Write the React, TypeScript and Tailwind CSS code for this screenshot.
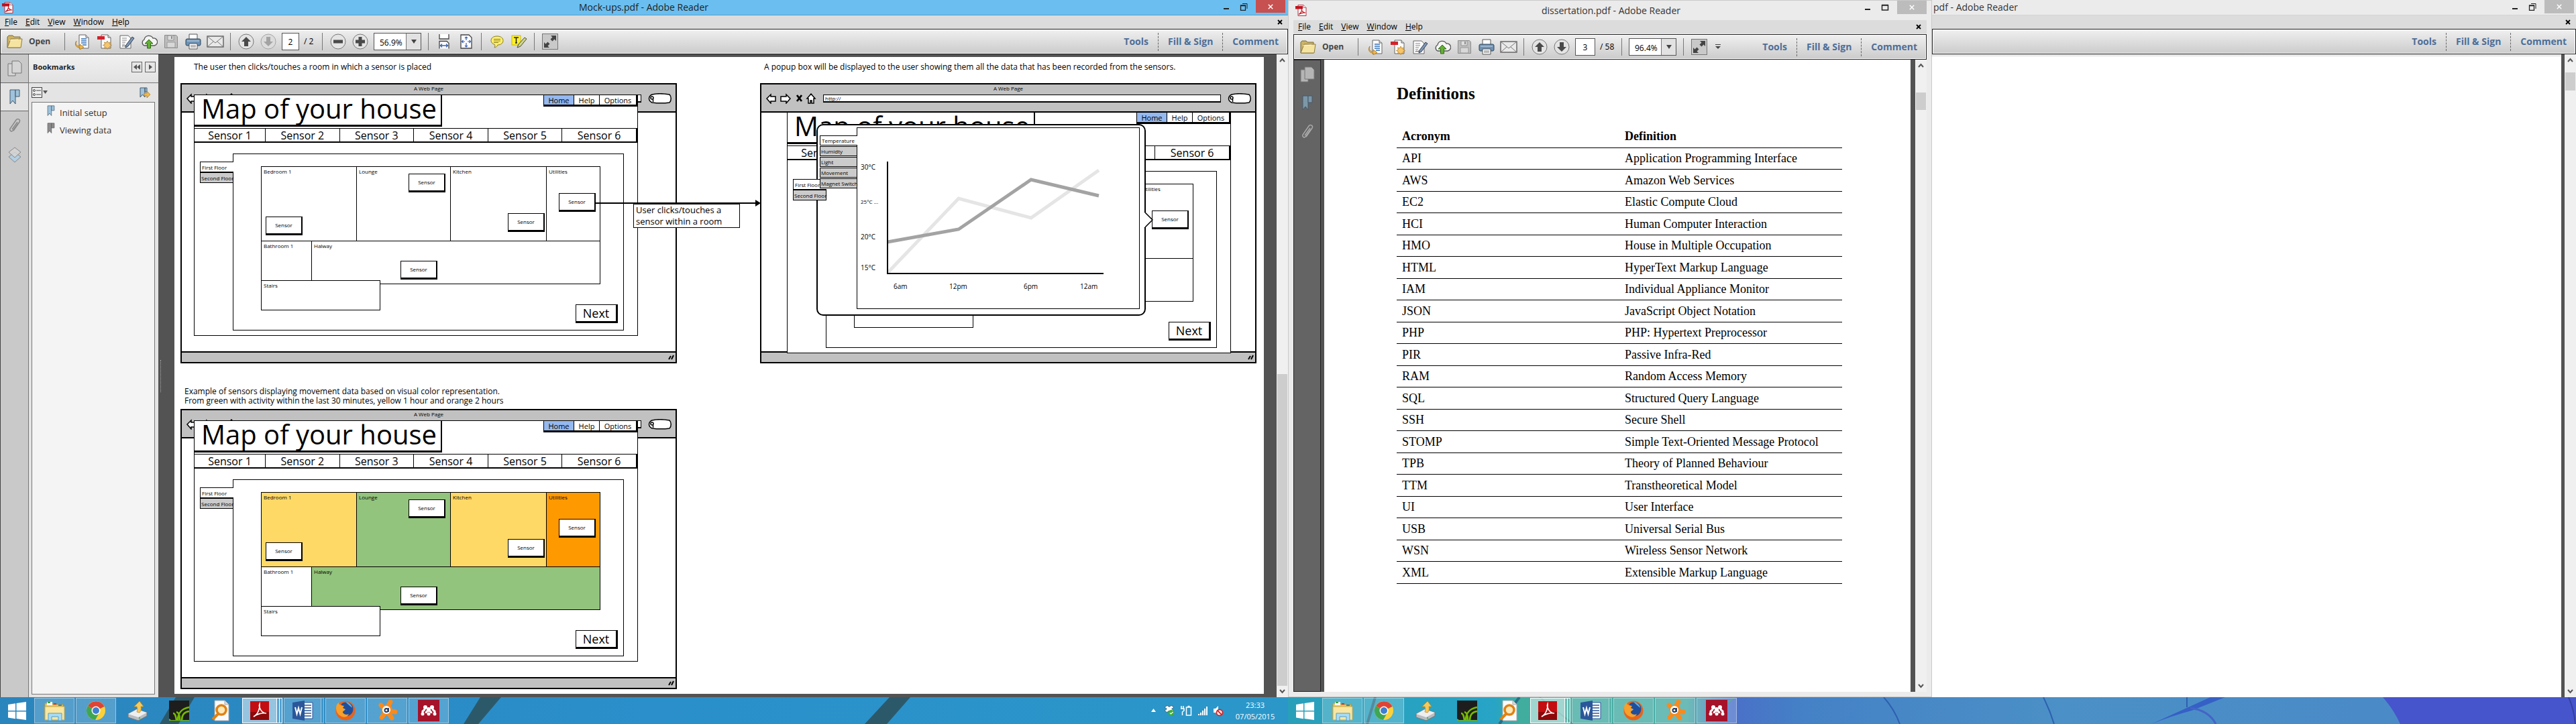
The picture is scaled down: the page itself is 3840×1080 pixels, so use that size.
import React from "react";

type Kids = { children?: React.ReactNode };

/* ---------- small drawings ---------- */

function PdfLogo() {
  return (
    <svg viewBox="0 0 17 17" className="h-[17px] w-[17px]" aria-hidden="true">
      <path d="M4 .5h8l4 4v12H4z" fill="#fff" stroke="#a34" />
      <path d="M12 .5v4h4" fill="#eee" stroke="#a34" strokeWidth=".7" />
      <path d="M0 2h11v4.5H0z" fill="#c1121c" />
      <path d="M5 14.5c3-2 5-5.500 4.500-7.500-.8 2 2.500 5 5.500 5-3-.5-7 .5-10 2.500z" fill="none" stroke="#c1121c" strokeWidth="1.200" />
    </svg>
  );
}

function Folder() {
  return (
    <svg viewBox="0 0 26 20" className="h-5 w-[26px]" aria-hidden="true">
      <path d="M2 19V3l2-2h6l2 2h9v16z" fill="#cdb366" stroke="#7d6a33" />
      <path d="M7 6h17l-2 13H2z" fill="#f5e3a0" stroke="#8d7a43" />
      <path d="M5 8l13-1" stroke="#fff8d8" />
    </svg>
  );
}

function DocPage({ children }: Kids) {
  return (
    <svg viewBox="0 0 24 24" className="h-6 w-6" aria-hidden="true">
      <path d="M7 2h10l4 4v16H7z" fill="#fbfbfb" stroke="#666" />
      <path d="M17 2v4h4" fill="#ddd" stroke="#666" />
      {children}
    </svg>
  );
}

const star = "M16 11l1.500 3 3-1-1 3 3 1.500-3 1.500 1 3-3-1-1.500 2.500-1.500-2.500-3 1 1-3-3-1.500 3-1.500-1-3 3 1z";

function ToolIcon({ name }: { name: string }) {
  switch (name) {
    case "convert":
      return (
        <DocPage>
          <path d="M10 8h8M10 11h8M10 14h8M12 17h6" stroke="#2f72b8" strokeWidth="1.500" />
          <path d="M3 11c-2 5 0 8 5 8v-3l6 4.500-6 3.500v-3C1 21 0 15 3 11z" fill="#f0b84a" stroke="#a8741a" strokeWidth=".8" />
        </DocPage>
      );
    case "create":
      return (
        <DocPage>
          <path d="M1 4h11v5H1z" fill="#d3222a" />
          <path d={star} fill="#f7c66a" stroke="#b5802a" strokeWidth=".8" />
        </DocPage>
      );
    case "sign":
      return (
        <svg viewBox="0 0 24 24" className="h-6 w-6" aria-hidden="true">
          <path d="M2 3h12l4 4v15H2z" fill="#fbfbfb" stroke="#666" />
          <path d="M5 7h7M5 10h7M5 13h5M5 16h4" stroke="#888" />
          <path d="M20 5l3 2-9 12-4 2 1-4z" fill="#7f97b5" stroke="#333f55" />
          <path d="M5 19c2-2 3 1 5-1" fill="none" stroke="#333" />
        </svg>
      );
    case "cloud":
      return (
        <svg viewBox="0 0 26 24" className="h-6 w-[26px]" aria-hidden="true">
          <path d="M6 18a5 5 0 010-9 7 7 0 0113-2 5.500 5.500 0 012 11z" fill="#f4f4f4" stroke="#555" strokeWidth="1.300" />
          <path d="M13 9l6 6h-3.500v7h-5v-7H7z" fill="#63b034" stroke="#2f6b12" />
        </svg>
      );
    case "save":
      return (
        <svg viewBox="0 0 22 22" className="h-[22px] w-[22px]" aria-hidden="true">
          <path d="M1.500 1.500h17l2 2v17h-19z" fill="#bdbdbd" stroke="#8d8d8d" />
          <path d="M6 2h9v7H6z" fill="#dedede" stroke="#959595" />
          <path d="M11 3h2v4h-2z" fill="#8d8d8d" />
          <path d="M5 12h12v8H5z" fill="#d8d8d8" stroke="#9a9a9a" />
        </svg>
      );
    case "print":
      return (
        <svg viewBox="0 0 24 24" className="h-6 w-6" aria-hidden="true">
          <path d="M6 1h12v9H6z" fill="#fff" stroke="#555" />
          <rect x="1" y="8" width="22" height="10" rx="2" fill="#6d92b4" stroke="#2e4459" />
          <path d="M3 11h18" stroke="#c9dcec" />
          <path d="M6 15h12v8H6z" fill="#fff" stroke="#555" />
          <path d="M8 18h8M8 20h8" stroke="#777" />
        </svg>
      );
    case "mail":
      return (
        <svg viewBox="0 0 26 18" className="h-[18px] w-[26px]" aria-hidden="true">
          <rect x="1" y="1" width="24" height="16" fill="#e9e9e9" stroke="#555" strokeWidth="1.300" />
          <path d="M1 1l12 10L25 1M1 17l9-8M25 17l-9-8" fill="none" stroke="#777" />
        </svg>
      );
    case "fitwidth":
      return (
        <svg viewBox="0 0 20 22" className="h-[22px] w-5" aria-hidden="true">
          <path d="M3 0v7h14V0" fill="#fff" stroke="#444" strokeWidth="1.300" />
          <path d="M3 21.500V10.500h11l3 3v8" fill="#fff" stroke="#444" strokeWidth="1.300" />
          <path d="M4 17h12M7 14.500L4.500 17 7 19.500M13 14.500l2.500 2.500-2.500 2.500" fill="none" stroke="#3a62b0" strokeWidth="1.300" />
        </svg>
      );
    case "fitpage":
      return (
        <svg viewBox="0 0 20 22" className="h-[22px] w-5" aria-hidden="true">
          <path d="M2 1h12l4 4v16H2z" fill="#fff" stroke="#444" strokeWidth="1.300" />
          <path d="M10 4v5M10 13v6M4 11h4M12 11h4M8 6l2-2 2 2M8 17l2 2 2-2M5.500 9l-2 2 2 2M14.500 9l2 2-2 2" fill="none" stroke="#3a62b0" strokeWidth="1.200" />
        </svg>
      );
    case "note":
      return (
        <svg viewBox="0 0 22 20" className="h-5 w-[22px]" aria-hidden="true">
          <path d="M11 2c6 0 9 3 9 6.500S17 15 12 15c-1 2-3 4-5 4 1-1 1-3 .5-4.500C4 13.500 2 11 2 8.500 2 5 5 2 11 2z" fill="#fdf06a" stroke="#8a7a20" />
          <path d="M6 6.500h10M6 9h10M6 11.500h7" stroke="#8a7a20" />
        </svg>
      );
    case "marker":
      return (
        <svg viewBox="0 0 24 22" className="h-[22px] w-6" aria-hidden="true">
          <rect x="1" y="2" width="13" height="14" fill="#fff12a" stroke="#b5a400" strokeWidth=".7" />
          <path d="M4 5h7M7.500 5v8M6 13h3" stroke="#222" strokeWidth="1.500" />
          <path d="M20 5l3 2-9 11-5 2 2-5z" fill="#cfd58a" stroke="#4a4a3a" />
        </svg>
      );
    default:
      return (
        <svg viewBox="0 0 24 24" className="h-6 w-6" aria-hidden="true">
          <rect x=".5" y=".5" width="23" height="23" fill="#c9c9c9" stroke="#777" />
          <path d="M13 3h8v8l-2.500-2.500-3 3-3-3 3-3zM3 21v-8l2.500 2.500 3-3 3 3-3 3L11 21z" fill="#444" />
        </svg>
      );
  }
}

function Round({ kind, dim }: { kind: "up" | "down" | "minus" | "plus"; dim?: boolean }) {
  const d = {
    up: "M12 5l7 7h-4v7H9v-7H5z",
    down: "M12 19l7-7h-4V5H9v7H5z",
    minus: "M5 9.500h14v5H5z",
    plus: "M9.500 5h5v4.500H19v5h-4.500V19h-5v-4.500H5v-5h4.500z",
  }[kind];
  return (
    <svg viewBox="0 0 24 24" className="h-6 w-6" aria-hidden="true">
      <circle cx="12" cy="12" r="11" fill={dim ? "#dcdcdc" : "#e4e4e4"} stroke={dim ? "#a5a5a5" : "#777"} />
      <path d={d} fill={dim ? "#a3a3a3" : "#4a4a4a"} />
    </svg>
  );
}

function Ribbon({ color, edge }: { color: string; edge: string }) {
  return (
    <svg viewBox="0 0 20 24" className="h-full w-full" aria-hidden="true">
      <path d="M3 1h8v21l-4-5-4 5z" fill={color} stroke={edge} />
      <path d="M11 1h6v10h-6z" fill={color} stroke={edge} />
    </svg>
  );
}

/* ---------- window chrome ---------- */

function Controls({ restore, red }: { restore?: boolean; red?: boolean }) {
  return (
    <div className="flex h-full items-start">
      <button aria-label="Minimize" className="flex h-5 w-6 items-center justify-center">
        <svg viewBox="0 0 10 10" className="h-2.5 w-2.5"><path d="M1 7h8v2H1z" fill="#222" /></svg>
      </button>
      <button aria-label={restore ? "Restore" : "Maximize"} className="flex h-5 w-7 items-center justify-center">
        <svg viewBox="0 0 12 12" className="h-3 w-3" fill="none" stroke="#222">
          {restore ? (
            <>
              <path d="M1.500 4h7v7.500h-7zM1 4.500h8" strokeWidth="1.300" />
              <path d="M4 1.500h7V9" />
            </>
          ) : (
            <path d="M1.500 3h9v7h-9zM1 2.500h10" strokeWidth="1.500" />
          )}
        </svg>
      </button>
      <button
        aria-label="Close"
        className={
          red
            ? "ml-1 flex h-[19px] w-11 items-center justify-center bg-[#c75050]"
            : "ml-1 flex h-5 w-11 items-center justify-center bg-[#bcbcbc]"
        }
      >
        <svg viewBox="0 0 10 10" className="h-2 w-2"><path d="M1 1l8 8M9 1L1 9" stroke="#fff" strokeWidth="1.800" /></svg>
      </button>
    </div>
  );
}

function CloseDoc() {
  return (
    <button aria-label="Close document" className="ml-auto flex w-4 items-center justify-center">
      <svg viewBox="0 0 8 8" className="h-2 w-2"><path d="M1 1l6 6M7 1L1 7" stroke="#000" strokeWidth="1.800" /></svg>
    </button>
  );
}

function Menu({ items = true }: { items?: boolean }) {
  return (
    <nav className="flex h-5 shrink-0 items-stretch bg-[#dcdcdc] pl-[7px] pr-1 text-xs leading-5 text-black">
      {items && (
        <div className="flex gap-3">
          {["File", "Edit", "View", "Window", "Help"].map((m) => (
            <button key={m} className="whitespace-nowrap"><u>{m[0]}</u>{m.slice(1)}</button>
          ))}
        </div>
      )}
      <CloseDoc />
    </nav>
  );
}

function Sep() {
  return <div className="mx-1.5 h-[26px] w-px shrink-0 bg-[#777]" />;
}

function IconButton({ label, children }: Kids & { label: string }) {
  return (
    <button aria-label={label} className="flex h-7 w-[33px] shrink-0 items-center justify-center">
      {children}
    </button>
  );
}

function RightTools() {
  return (
    <div className="ml-auto flex items-center pr-[13px] text-sm font-bold text-[#4d6e99]">
      <button className="pr-3.5">Tools</button>
      <button className="h-[27px] whitespace-nowrap border-l border-dashed border-[#666] px-3.5">Fill &amp; Sign</button>
      <button className="h-[27px] border-l border-dashed border-[#666] pl-3.5">Comment</button>
    </div>
  );
}

function Toolbar({ page, total, zoom, full }: { page?: string; total?: string; zoom?: string; full?: boolean }) {
  return (
    <div className="flex h-[38px] shrink-0 items-center border border-[#222] bg-linear-to-b from-[#f0f0f0] to-[#cbcbcb] shadow-[inset_0_0_0_1px_#fff]">
      {page && (
        <>
          <button className="flex w-[89px] items-center gap-2 pl-2 text-xs font-bold text-[#444]">
            <Folder /> Open
          </button>
          <Sep />
          <div className="flex pl-[3px]">
            {["convert", "create", "sign", "cloud", "save", "print", "mail"].map((n) => (
              <IconButton key={n} label={n}><ToolIcon name={n} /></IconButton>
            ))}
          </div>
          <Sep />
          <IconButton label="Previous page"><Round kind="up" /></IconButton>
          <IconButton label="Next page"><Round kind="down" dim={full} /></IconButton>
          <input
            aria-label="Page number"
            defaultValue={page}
            className={
              full
                ? "ml-1 h-[26px] w-[26px] border border-[#555] bg-white text-center text-xs"
                : "ml-1 h-[26px] w-[30px] border border-[#555] bg-white text-center text-xs"
            }
          />
          <span className={full ? "ml-[7px] w-[21px] whitespace-nowrap text-xs" : "ml-[7px] w-[26px] whitespace-nowrap text-xs"}>/ {total}</span>
          <Sep />
          {full && (
            <>
              <IconButton label="Zoom out"><Round kind="minus" /></IconButton>
              <IconButton label="Zoom in"><Round kind="plus" /></IconButton>
            </>
          )}
          <div className="relative ml-1 mr-1 h-[26px] w-[71px] border border-[#555] bg-white">
            <select aria-label="Zoom" defaultValue={zoom} className="h-full w-full appearance-none pl-2 text-xs leading-6">
              <option>{zoom}</option>
            </select>
            <div className="pointer-events-none absolute inset-y-0 right-0 flex w-[22px] items-center justify-center border-l border-[#777] bg-[#e2e2e2]">
              <svg viewBox="0 0 8 6" className="h-1.5 w-2"><path d="M0 0h8L4 6z" fill="#444" /></svg>
            </div>
          </div>
          <Sep />
          {full && (
            <>
              <IconButton label="Fit width"><ToolIcon name="fitwidth" /></IconButton>
              <IconButton label="Fit page"><ToolIcon name="fitpage" /></IconButton>
              <Sep />
              <IconButton label="Add note"><ToolIcon name="note" /></IconButton>
              <IconButton label="Highlight"><ToolIcon name="marker" /></IconButton>
              <Sep />
            </>
          )}
          <IconButton label="Read mode"><ToolIcon name="expand" /></IconButton>
          {!full && (
            <button aria-label="More tools" className="ml-2">
              <svg viewBox="0 0 8 8" className="h-2 w-2"><path d="M0 0h8v1H0zM0 3h8L4 7z" fill="#444" /></svg>
            </button>
          )}
        </>
      )}
      <RightTools />
    </div>
  );
}

function ScrollBar({ pos }: { pos: "low" | "near" | "top" }) {
  const arrow = (d: string) => (
    <svg viewBox="0 0 9 7" className="h-[7px] w-[9px]" fill="none" stroke="#555" strokeWidth="2"><path d={d} /></svg>
  );
  return (
    <div className="flex w-[17px] shrink-0 flex-col bg-[#f0f0f0] px-px" role="scrollbar" aria-controls="pages" aria-valuenow={50}>
      <div className="flex h-[17px] items-center justify-center">{arrow("M1 6l3.500-4L8 6")}</div>
      <div className="flex min-h-0 flex-1 flex-col">
        {pos === "low" && <div className="flex-1" />}
        {pos === "low" && <div className="h-[465px] bg-[#cdcdcd]" />}
        {pos === "near" && <div className="mt-8 h-[26px] bg-[#cdcdcd]" />}
        {pos === "top" && <div className="mt-2.5 h-[27px] bg-[#cdcdcd]" />}
      </div>
      <div className="flex h-[17px] items-center justify-center">{arrow("M1 1l3.500 4L8 1")}</div>
    </div>
  );
}

/* ---------- wireframe pieces ---------- */

function Sensor({ place }: { place: string }) {
  return (
    <button className={`absolute flex h-[28px] w-[55px] items-center justify-center border border-b-[3px] border-r-2 border-black bg-white text-[8px] ${place}`}>
      Sensor
    </button>
  );
}

function Room({ name, cls, children }: Kids & { name: string; cls: string }) {
  return (
    <div className={`relative border-black pl-[3px] pt-0.5 text-[8px] leading-[10px] ${cls}`}>
      {name}
      {children}
    </div>
  );
}

function HousePage({ colored }: { colored?: boolean }) {
  const yellow = colored ? "bg-[#ffd966]" : "";
  const green = colored ? "bg-[#93c47d]" : "";
  const orange = colored ? "bg-[#ff9900]" : "";
  return (
    <div className="h-[360px] w-[662px] border border-black bg-white">
      <div className="flex items-start justify-between">
        <h2 className="-mt-px h-[48px] w-[369px] border-b-[3px] border-r-2 border-t border-black pl-2.5 text-[40px] leading-[40px]">
          Map of your house
        </h2>
        <div className="-mt-px flex h-[18px] border-b-[3px] border-r-2 border-t border-black text-[11px] leading-[15px]">
          <button className="w-[45px] border-l border-black bg-[#94b8f0]">Home</button>
          <button className="w-[38px] border-l border-black">Help</button>
          <button className="w-[55px] border-l border-black">Options</button>
        </div>
      </div>
      <div className="mt-0.5 grid h-[22px] grid-cols-[105px_repeat(5,1fr)] border-b-2 border-r-2 border-t border-black text-center leading-5">
        {[1, 2, 3, 4, 5, 6].map((n) => (
          <button key={n} className={n > 1 ? "border-l border-black" : ""}>Sensor {n}</button>
        ))}
      </div>
      <div className="ml-2 mt-4 flex">
        <div className="relative z-10 -mr-px mt-3 flex w-[50px] flex-col text-[8px] leading-[13px]">
          <button className="h-4 whitespace-nowrap border-y border-l border-black bg-white pl-0.5 text-left">First Floor</button>
          <button className="h-4 whitespace-nowrap border border-black bg-[#cbcbcb] pl-px text-left">Second Floor</button>
        </div>
        <div className="relative h-[264px] w-[583px] border border-black pl-[41px] pt-[18px]">
          <div className="w-[506px] border border-black">
            <div className="grid h-[110px] grid-cols-[141px_140px_143px_1fr]">
              <Room name="Bedroom 1" cls={yellow}><Sensor place="left-[6px] top-[74px]" /></Room>
              <Room name="Lounge" cls={`border-l ${green}`}><Sensor place="left-[77px] top-[10px]" /></Room>
              <Room name="Kitchen" cls={`border-l ${yellow}`}><Sensor place="left-[85px] top-[69px]" /></Room>
              <Room name="Utilities" cls={`border-l ${orange}`}><Sensor place="left-[18px] top-[39px]" /></Room>
            </div>
            <div className="grid h-16 grid-cols-[74px_1fr] border-t border-black">
              <Room name="Bathroom 1" cls="" />
              <Room name="Halway" cls={`border-l ${green}`}><Sensor place="left-[132px] top-[29px]" /></Room>
            </div>
          </div>
          <div className="relative -mt-1.5 h-[45px] w-[178px] border border-black bg-white pl-[3px] pt-0.5 text-[8px] leading-[10px]">Stairs</div>
          <button className="absolute bottom-2.5 right-2 flex h-[28px] w-[63px] items-center justify-center border border-b-[3px] border-r-[3px] border-black bg-white text-lg">
            Next
          </button>
        </div>
      </div>
    </div>
  );
}

function NavArrows() {
  return (
    <svg viewBox="0 0 80 16" className="h-4 w-20 shrink-0" fill="#fff" stroke="#000" strokeWidth="1.500" aria-hidden="true">
      <path d="M2 8l6-6v3h7v7H8v3z" />
      <path d="M37 8l-6-6v3h-8v7h8v3z" />
      <path d="M47 3l7 9M54 3l-7 9" strokeWidth="2.800" />
      <path d="M68 1l6 7h-2v7h-3v-4h-2v4h-3V8h-2z" />
    </svg>
  );
}

function MockBrowser({ url, page, children }: Kids & { url?: boolean; page: string }) {
  return (
    <div className="relative flex h-[418px] w-[740px] shrink-0 flex-col border-2 border-black bg-white">
      <div className="flex h-[42px] shrink-0 flex-col border-b-2 border-black bg-[#c1c1c1]">
        <p className="h-[13px] text-center text-[8px] leading-3">A Web Page</p>
        <div className="flex items-center gap-1.5 pl-1.5 pr-[5px]">
          <NavArrows />
          {url ? (
            <input aria-label="Address" defaultValue="http://" className="h-3 min-w-0 flex-1 border border-b-2 border-black bg-white pl-0.5 text-[8px] leading-none" />
          ) : (
            <div className="h-3 flex-1 border border-b-2 border-black bg-white" />
          )}
          <svg viewBox="0 0 36 16" className="ml-1 h-4 w-9 shrink-0" fill="#fff" stroke="#000" strokeWidth="1.500" aria-hidden="true">
            <path d="M6 2c8-2 20-1 26 0 3 3 3 9 0 12-7 1-18 1-26 0-6-3-6-9 0-12z" />
            <circle cx="6" cy="7" r="2" /><path d="M7.500 9v4" />
          </svg>
        </div>
      </div>
      <div className="flex-1" />
      <div className="flex h-4 items-center justify-end border-t-2 border-black bg-[#c1c1c1] pr-0.5">
        <svg viewBox="0 0 9 8" className="h-2 w-[9px]"><path d="M1 7l3-5M5 7l3-6" stroke="#000" strokeWidth="2" /></svg>
      </div>
      <div className={`absolute ${page}`}>{children}</div>
    </div>
  );
}

function TempPopup() {
  return (
    <div className="absolute left-[84px] top-[61px] h-[286px] w-[491px] rounded-[10px] border-2 border-black bg-white">
      <svg viewBox="0 0 15 26" className="absolute -right-[14px] top-[128px] h-[26px] w-[15px]" aria-hidden="true">
        <path d="M1 1l12 12L1 25" fill="#fff" stroke="#000" strokeWidth="1.500" />
        <path d="M.5 2v22" stroke="#fff" strokeWidth="2" />
      </svg>
      <div className="flex pl-[3px] pt-[3px]">
        <div className="relative z-10 -mr-px mt-3 flex w-14 flex-col gap-px text-[8px]">
          {["Temperature", "Humidty", "Light", "Movement", "Magnet Switch"].map((t, i) => (
            <button
              key={t}
              className={
                i === 0
                  ? "h-[15px] whitespace-nowrap border-y border-l border-black bg-white pl-0.5 text-left leading-[12px]"
                  : "h-[15px] whitespace-nowrap border border-black bg-[#cbcbcb] pl-px text-left leading-[12px]"
              }
            >
              {t}
            </button>
          ))}
        </div>
        <svg viewBox="0 0 422 271" className="h-[271px] w-[422px]" fontFamily="Open Sans, sans-serif" fontSize="10">
          <rect x=".5" y=".5" width="421" height="270" fill="#fff" stroke="#000" />
          <path d="M47 216L152 106l108 29 101-71" fill="none" stroke="#e5e5e5" strokeWidth="5" />
          <path d="M46 171l106-19L260 78l101 24" fill="none" stroke="#a3a3a3" strokeWidth="5" />
          <path d="M46 51v167h322" fill="none" stroke="#000" strokeWidth="2" />
          <text x="6" y="63">30°C</text>
          <text x="6" y="114" fontSize="8">25°C ...</text>
          <text x="6" y="167">20°C</text>
          <text x="6" y="213">15°C</text>
          <text x="55" y="241">6am</text>
          <text x="138" y="241">12pm</text>
          <text x="249" y="241">6pm</text>
          <text x="333" y="241">12am</text>
        </svg>
      </div>
    </div>
  );
}

function MockDocument() {
  return (
    <div id="pages" className="min-w-0 flex-1 overflow-hidden bg-white pl-[9px] text-black">
      <div className="flex gap-[124px]">
        <section className="relative">
          <p className="flex h-[39px] items-center pb-2.5 pl-5 text-xs">The user then clicks/touches a room in which a sensor is placed</p>
          <MockBrowser page="left-[18px] top-[15px]"><HousePage /></MockBrowser>
          <svg viewBox="0 0 247 12" className="absolute left-[619px] top-[212px] h-3 w-[247px]" aria-hidden="true">
            <path d="M0 6h240" stroke="#000" strokeWidth="2" />
            <path d="M238 1l8 5-8 5z" />
          </svg>
          <p className="absolute left-[675px] top-[218px] w-[159px] whitespace-nowrap border border-t-2 border-black bg-white pl-[3px] text-[13px] leading-[17px]">
            User clicks/touches a<br />sensor within a room
          </p>
        </section>
        <section>
          <p className="flex h-[39px] items-center whitespace-nowrap pb-2.5 pl-1.5 text-xs">A popup box will be displayed to the user showing them all the data that has been recorded from the sensors.</p>
          <MockBrowser url page="left-[38px] top-[41px]"><HousePage /></MockBrowser>
          <div className="relative -mt-[418px] h-0"><TempPopup /></div>
        </section>
      </div>
      <section className="mt-[35px]">
        <p className="h-[33px] pl-1.5 text-xs leading-[14px]">
          Example of sensors displaying movement data based on visual color representation.<br />
          From green with activity within the last 30 minutes, yellow 1 hour and orange 2 hours
        </p>
        <MockBrowser page="left-[18px] top-[15px]"><HousePage colored /></MockBrowser>
      </section>
    </div>
  );
}

/* ---------- windows ---------- */

function SideIcons({ dark }: { dark?: boolean }) {
  const c = dark ? "#b5b5b5" : "#d5d5d5";
  return (
    <div className={dark ? "flex w-[41px] shrink-0 flex-col items-center border border-[#222] bg-[#646464]" : "flex w-[42px] shrink-0 flex-col items-center border-l border-[#444] bg-[#c9c9c9]"}>
      <button aria-label="Pages" className="flex h-[42px] w-full items-center justify-center">
        <svg viewBox="0 0 22 24" className="h-6 w-[22px]" fill={c} stroke="#777">
          <path d="M1 5h11v18H1z" /><path d="M7 1h10l4 4v14H7z" />
        </svg>
      </button>
      <button aria-label="Bookmarks" className={dark ? "flex h-[43px] w-full items-center justify-center" : "flex h-[43px] w-full items-center justify-center border-y border-[#666] bg-[#e3e3e3]"}>
        <span className="h-6 w-5"><Ribbon color={dark ? "#7d97a8" : "#9fc3dc"} edge="#44586a" /></span>
      </button>
      <button aria-label="Attachments" className="flex h-[43px] w-full items-center justify-center">
        <svg viewBox="0 0 20 24" className="h-6 w-5" fill="none" stroke={dark ? "#aaa" : "#888"} strokeWidth="1.500">
          <path d="M15 8L7 19c-2 2-5 0-4-3L12 3c2-3 7-1 5 3L8 19M14 6L6 17" />
        </svg>
      </button>
      {!dark && (
        <button aria-label="Layers" className="flex h-[43px] w-full items-center justify-center">
          <svg viewBox="0 0 24 24" className="h-6 w-6" stroke="#888">
            <path d="M12 8l9 7-9 8-9-8z" fill="#b3cfe2" /><path d="M12 1l9 7-9 8-9-8z" fill="#d6d6d6" fillOpacity=".8" />
          </svg>
        </button>
      )}
    </div>
  );
}

function BookmarksPanel() {
  const box = "flex h-4 w-4 items-center justify-center border border-[#666] bg-[#e6e6e6]";
  return (
    <aside className="flex w-[194px] shrink-0 flex-col border-l border-[#777] bg-[#e4e4e4]">
      <div className="flex h-[43px] items-center gap-1 border-b border-[#777] bg-linear-to-b from-[#f1f1f1] to-[#e2e2e2] pb-1 pl-1.5 pr-1">
        <h3 className="mr-auto text-[11px] font-bold text-[#222]">Bookmarks</h3>
        <button aria-label="Collapse" className={box}><svg viewBox="0 0 10 8" className="h-2 w-2.5"><path d="M5 0v8L0 4zM10 0v8L5 4z" fill="#555" /></svg></button>
        <button aria-label="Undock" className={box}><svg viewBox="0 0 5 8" className="h-2 w-[5px]"><path d="M0 0v8l5-4z" fill="#555" /></svg></button>
      </div>
      <div className="flex h-7 items-center justify-between pl-1 pr-3">
        <button aria-label="Options">
          <svg viewBox="0 0 25 16" className="h-4 w-[25px]">
            <rect x=".5" y=".5" width="15" height="15" fill="#eee" stroke="#444" />
            <path d="M7 5h7M7 11h7" stroke="#444" /><circle cx="4" cy="5" r="1.500" fill="none" stroke="#444" /><circle cx="4" cy="11" r="1.500" fill="none" stroke="#444" />
            <path d="M17 5h7l-3.500 5z" fill="#555" />
          </svg>
        </button>
        <button aria-label="New bookmark" className="h-[17px] w-4">
          <svg viewBox="0 0 16 17" className="h-full w-full">
            <path d="M1 1h7v14l-3.500-4L1 15zM8 1h3v6H8z" fill="#9fc3dc" stroke="#44586a" />
            <path d="M7 9h4V6l5 5-5 5v-3H7z" fill="#f0b84a" stroke="#a8741a" strokeWidth=".7" />
          </svg>
        </button>
      </div>
      <ul className="mb-1 ml-1 mr-[5px] flex-1 border border-[#777] bg-[#f4f4f4] pl-[21px] pt-0.5 text-[13px] leading-[26px] text-[#3a3028]">
        <li className="flex gap-1.5"><span className="mt-0.5 h-[17px] w-3.5"><Ribbon color="#9fc3dc" edge="#44586a" /></span><a href="#setup">Initial setup</a></li>
        <li className="flex gap-1.5"><span className="mt-0.5 h-[17px] w-3.5"><Ribbon color="#8c8c8c" edge="#555" /></span><a href="#viewing">Viewing data</a></li>
      </ul>
    </aside>
  );
}

function MockupsWindow() {
  return (
    <main className="flex w-1/2 flex-col overflow-hidden">
      <header className="grid h-[23px] shrink-0 grid-cols-[1fr_auto_1fr] items-center border-b border-[#5a9dc8] bg-[#6abff0] pl-[3px] pr-1">
        <PdfLogo />
        <h1 className="text-sm leading-[22px] text-[#222]">Mock-ups.pdf - Adobe Reader</h1>
        <div className="h-full justify-self-end"><Controls restore red /></div>
      </header>
      <Menu />
      <Toolbar page="2" total="2" zoom="56.9%" full />
      <div className="flex min-h-0 flex-1 bg-[#535353]">
        <SideIcons />
        <BookmarksPanel />
        <div className="flex w-6 items-center pl-[3px]"><div className="h-12 border-l border-dotted border-[#aaa]" /></div>
        <div className="mr-[19px] flex min-w-0 flex-1 pb-[5px] pt-1"><MockDocument /></div>
        <ScrollBar pos="low" />
      </div>
    </main>
  );
}

const definitions: [string, string][] = [
  ["API", "Application Programming Interface"],
  ["AWS", "Amazon Web Services"],
  ["EC2", "Elastic Compute Cloud"],
  ["HCI", "Human Computer Interaction"],
  ["HMO", "House in Multiple Occupation"],
  ["HTML", "HyperText Markup Language"],
  ["IAM", "Individual Appliance Monitor"],
  ["JSON", "JavaScript Object Notation"],
  ["PHP", "PHP: Hypertext Preprocessor"],
  ["PIR", "Passive Infra-Red"],
  ["RAM", "Random Access Memory"],
  ["SQL", "Structured Query Language"],
  ["SSH", "Secure Shell"],
  ["STOMP", "Simple Text-Oriented Message Protocol"],
  ["TPB", "Theory of Planned Behaviour"],
  ["TTM", "Transtheoretical Model"],
  ["UI", "User Interface"],
  ["USB", "Universal Serial Bus"],
  ["WSN", "Wireless Sensor Network"],
  ["XML", "Extensible Markup Language"],
];

function DissertationWindow() {
  return (
    <main className="flex w-1/4 flex-col overflow-hidden border border-[#c9c9c9] bg-[#ebebeb] px-[7px] pb-[7px]">
      <header className="grid h-[29px] shrink-0 grid-cols-[1fr_auto_1fr] items-center pl-[3px]">
        <PdfLogo />
        <h1 className="text-sm text-[#333]">dissertation.pdf - Adobe Reader</h1>
        <div className="h-full justify-self-end"><Controls /></div>
      </header>
      <Menu />
      <div className="h-px" />
      <Toolbar page="3" total="58" zoom="96.4%" />
      <div className="flex min-h-0 flex-1 bg-[#535353]">
        <SideIcons dark />
        <article className="ml-[5px] mr-[7px] min-w-0 flex-1 overflow-hidden bg-white pl-[108px] pr-[102px] pt-[35px] font-['Liberation_Serif',serif] text-black">
          <h2 className="text-[25px] font-bold leading-8">Definitions</h2>
          <table className="mt-[31px] w-full table-fixed text-lg leading-5">
            <thead>
              <tr className="h-[33px] border-b border-black text-left">
                <th className="w-[332px] pl-2">Acronym</th>
                <th className="pl-2">Definition</th>
              </tr>
            </thead>
            <tbody>
              {definitions.map(([a, d]) => (
                <tr key={a} className="h-8 border-b border-black even:h-[33px]">
                  <td className="pl-2">{a}</td>
                  <td className="whitespace-nowrap pl-2">{d}</td>
                </tr>
              ))}
            </tbody>
          </table>
        </article>
        <ScrollBar pos="near" />
      </div>
    </main>
  );
}

function BackgroundWindow() {
  return (
    <main className="flex w-1/4 flex-col overflow-hidden">
      <header className="flex h-[23px] shrink-0 items-center justify-between border-b border-[#d5d5d5] bg-[#ebebeb] pr-[3px]">
        <div className="flex w-32 justify-end overflow-hidden whitespace-nowrap text-sm leading-[22px] text-[#333]">pdf - Adobe Reader</div>
        <Controls restore />
      </header>
      <Menu items={false} />
      <Toolbar />
      <div className="flex min-h-0 flex-1 bg-[#535353]">
        <div className="mr-[5px] flex-1 bg-white"><div className="h-1 bg-linear-to-b from-[#ddd] to-[#f6f6f6]" /></div>
        <ScrollBar pos="top" />
      </div>
    </main>
  );
}

/* ---------- taskbar ---------- */

function AppIcon({ name }: { name: string }) {
  const art: Record<string, React.ReactNode> = {
    explorer: (
      <>
        <path d="M2 5h10l2 2h15v22H2z" fill="#e8c860" stroke="#b8962e" />
        <path d="M5 3h8v5H5z" fill="#fff" /><path d="M6 3h4v2H6z" fill="#3aa53a" /><path d="M15 5h4v2h-4z" fill="#c33" /><path d="M22 7h5v2h-5z" fill="#2b82c9" />
        <path d="M2 10h29v20H2z" fill="#f9e6a0" stroke="#c9a94c" />
        <path d="M7 31V20h20v11h-5v-6H12v6z" fill="#a9dcf5" stroke="#4f9fc9" />
      </>
    ),
    chrome: (
      <>
        <circle cx="16" cy="16" r="14" fill="#fbd13a" />
        <path d="M16 16L4 9a14 14 0 0124.500 1z" fill="#dd4437" />
        <path d="M16 16L3.800 9A14 14 0 0015 30l6-11z" fill="#3fa652" />
        <circle cx="16" cy="16" r="6.500" fill="#fff" /><circle cx="16" cy="16" r="5" fill="#3f7fd0" />
      </>
    ),
    drive: (
      <>
        <path d="M2 21l13-7 15 5v5l-13 7-15-5z" fill="#b9bdc2" stroke="#777" />
        <path d="M2 21l13-7 15 5-13 7z" fill="#eceef0" /><circle cx="19" cy="27" r="1.200" fill="#2c2" />
        <path d="M15 18c1-3 1-5 0-8h-4l8-8 6 8h-4c1 4 0 7-2 9z" fill="#f6c95a" stroke="#c08d20" strokeWidth=".8" />
      </>
    ),
    nvidia: (
      <>
        <rect x="1" y="1" width="30" height="30" fill="#1d1d1d" /><path d="M1 31V28l3 2h27v1z" fill="#76b900" />
        <path d="M7 20c3 0 4 4 5 10M12 18c4 1 5 6 5 12M14 30c0-10 6-17 17-19M20 30c0-8 4-12 11-13" fill="none" stroke="#76b900" strokeWidth="2.600" />
      </>
    ),
    search: (
      <>
        <path d="M7 1h15l6 6v24H7z" fill="#fafafa" stroke="#aaa" /><path d="M22 1v6h6" fill="#ddd" stroke="#aaa" />
        <circle cx="17" cy="15" r="7" fill="#ffe9b8" stroke="#e08214" strokeWidth="3.500" /><path d="M12 21l-8 8" stroke="#e08214" strokeWidth="4" />
      </>
    ),
    adobe: (
      <>
        <rect x="2" y="2" width="28" height="28" fill="#c40d10" /><path d="M2 18h28v12H2z" fill="#8e0709" />
        <path d="M7 25c6-3 10-12 9-19-2 5 3 14 10 14-6-1-14 1-19 5z" fill="none" stroke="#fff" strokeWidth="1.700" />
      </>
    ),
    word: (
      <>
        <path d="M17 4h14v24H17z" fill="#fff" stroke="#2b579a" /><path d="M19 8h10M19 12h10M19 16h10M19 20h10M19 24h10" stroke="#2b579a" strokeWidth="1.500" />
        <path d="M1 4l18-3v30L1 28z" fill="#2b579a" />
        <path d="M5 11l2.500 10L10 12l2.500 9L15 11" fill="none" stroke="#fff" strokeWidth="2" />
      </>
    ),
    firefox: (
      <>
        <circle cx="16" cy="16" r="14.500" fill="#e8641b" /><path d="M10 6a11 11 0 0117 4c2 8-3 14-9 14-5 0-8-3-8-7z" fill="#1f4f9c" />
        <path d="M16 3a11 11 0 0110 9c-3-3-6-5-10-9z" fill="#5fb5e8" />
        <path d="M2 12c0-4 2-7 4-8 0 2 1 3 3 4l5 1-2 3 4 2c-1 2-4 2-4 5 2 3 6 4 9 2-2 5-8 6-12 3-4-2-7-6-7-12z" fill="#f7a02a" />
      </>
    ),
    avast: (
      <>
        <path d="M16 12L21 3M16 16l12 2M18 19l5 8M14 18l-6 8M12 13L7 8" stroke="#f68b1f" strokeWidth="7" strokeLinecap="round" />
        <circle cx="16" cy="15" r="8" fill="#f68b1f" /><circle cx="15" cy="15" r="6" fill="#fff" />
        <circle cx="15" cy="15.500" r="2.500" fill="none" stroke="#243a5e" strokeWidth="2" /><path d="M18 12v6" stroke="#243a5e" strokeWidth="1.800" />
      </>
    ),
    mendeley: (
      <>
        <rect x="0" y="0" width="32" height="32" fill="#a5122a" />
        <path d="M7 21v-4c2-1 4-4 4-6M25 21v-4c-2-1-4-4-4-6M12 20c0-5 8-5 8 0" fill="none" stroke="#fff" strokeWidth="3" />
        <circle cx="11" cy="11" r="3" fill="#fff" /><circle cx="21" cy="11" r="3" fill="#fff" /><circle cx="16" cy="14" r="3" fill="#fff" />
        <circle cx="7" cy="21" r="2.500" fill="#fff" /><circle cx="16" cy="21" r="2.500" fill="#fff" /><circle cx="25" cy="21" r="2.500" fill="#fff" />
      </>
    ),
  };
  return <svg viewBox="0 0 32 32" className="h-8 w-8" aria-hidden="true">{art[name]}</svg>;
}

const apps: [string, string][] = [
  ["explorer", "open"],
  ["chrome", "open"],
  ["drive", "idle"],
  ["nvidia", "idle"],
  ["search", "idle"],
  ["adobe", "active"],
  ["word", "stack"],
  ["firefox", "open"],
  ["avast", "open"],
  ["mendeley", "open"],
];

const frames: Record<string, string> = {
  open: "flex flex-1 items-center justify-center border border-white/40 bg-white/20",
  idle: "flex flex-1 items-center justify-center",
  active: "flex flex-1 items-center justify-center border border-white bg-white/50",
  stack: "flex flex-1 items-center justify-center border border-white/40 bg-white/20",
};

function AppButtons() {
  return (
    <div className="relative flex items-center">
      <button aria-label="Start" className="mr-3 pl-3">
        <svg viewBox="0 0 27 27" className="h-[27px] w-[27px]" fill="#fff" aria-hidden="true">
          <path d="M0 4l11-1.700V13H0zM12.500 2L27 0v13H12.500zM0 14.500h11v10.700L0 23.500zM12.500 14.500H27V27l-14.500-2z" />
        </svg>
      </button>
      <div className="flex h-[38px] gap-0.5">
        {apps.map(([name, state]) => (
          <button key={name} aria-label={name} className="flex w-[60px]">
            <span className={`h-full ${frames[state]}`}><AppIcon name={name} /></span>
            {state === "active" && (
              <>
                <span className="h-full w-1 border-y border-r border-white bg-white/20" />
                <span className="h-full w-1 border-y border-r border-white bg-white/20" />
              </>
            )}
            {state === "stack" && <span className="h-full w-1 border-y border-r border-white/40 bg-white/10" />}
          </button>
        ))}
      </div>
    </div>
  );
}

function Tray() {
  return (
    <div className="relative ml-auto flex items-center pr-[19px] text-white">
      <svg viewBox="0 0 112 18" className="h-[18px] w-28" aria-hidden="true">
        <path d="M1 11h7L4.500 6z" fill="#fff" />
        <path d="M21 4l4-2.500 3 2 3-2L35 4l-3.500 2.500L35 9l-3.500 2.500L28 9l-3.500 2.500L21 9l3.500-2.500z" fill="#fff" stroke="#234" strokeWidth=".6" />
        <circle cx="31" cy="12.500" r="4.500" fill="#3cae3c" /><path d="M29 12.500l1.500 1.500 3-3" fill="none" stroke="#fff" strokeWidth="1.200" />
        <path d="M46 2v4M49 2v4M45 6h5v3l-2.500 2v5" fill="none" stroke="#fff" strokeWidth="1.500" />
        <path d="M53.500 4h7v12h-7zM55.500 2.500h3" fill="none" stroke="#fff" strokeWidth="1.500" />
        <path d="M71 14h2v2h-2zM74 12h2v4h-2zM77 9h2v7h-2zM80 6h2v10h-2zM83 3h2v13h-2z" fill="#fff" />
        <path d="M94 6h3l4-4v14l-4-4h-3z" fill="#fff" />
        <circle cx="103" cy="12" r="4.500" fill="#fff" stroke="#d22" strokeWidth="1.800" /><path d="M100 9l6 6" stroke="#d22" strokeWidth="1.800" />
      </svg>
      <time className="ml-3.5 w-[60px] whitespace-nowrap text-center text-[11px] leading-[17px]">23:33<br />07/05/2015</time>
    </div>
  );
}

function Taskbar() {
  return (
    <footer className="flex h-10 shrink-0">
      <div className="relative flex w-1/2 bg-linear-to-r from-[#2b85bd] via-[#2a8fca] to-[#2b97c9]">
        <svg viewBox="0 0 1920 40" preserveAspectRatio="none" className="absolute inset-0 h-full w-full" aria-hidden="true">
          <path d="M262 0h28l-24 40h-28zM716 0h31l-34 40h-22zM1326 0h31l-35 40h-33z" fill="#2c596a" />
        </svg>
        <AppButtons />
        <Tray />
      </div>
      <div className="relative flex w-1/2">
        <svg viewBox="0 0 1920 40" preserveAspectRatio="none" className="absolute inset-0 h-full w-full" aria-hidden="true">
          <defs>
            <linearGradient id="sky">
              <stop offset="0" stopColor="#2a9fba" /><stop offset=".16" stopColor="#27a4c6" /><stop offset=".18" stopColor="#40ad9f" />
              <stop offset=".31" stopColor="#48aaa6" /><stop offset=".345" stopColor="#4a70c8" /><stop offset=".4" stopColor="#4481c6" />
              <stop offset=".6" stopColor="#4b90c6" /><stop offset=".83" stopColor="#4a8bc7" />
            </linearGradient>
          </defs>
          <path d="M0 0h1920v40H0z" fill="url(#sky)" />
          <path d="M130 0l-12 40M345 0l-30 40" stroke="#2a6e88" strokeWidth="4" fill="none" />
          <path d="M375 0l50 40M665 0l-25 22" stroke="#379086" strokeWidth="2" fill="none" />
          <path d="M888 0q16 18 24 40M1126 0q10 20 16 40M1340 0v15" stroke="#2e5fb0" strokeWidth="2" fill="none" />
          <path d="M1375 0h22l-50 20q-30 8-60 20z" fill="#3560c6" />
          <path d="M1345 16q28 4 38 24" stroke="#4464c8" strokeWidth="3" fill="none" />
          <path d="M1632 0h288v40h-262q-10-22-26-40z" fill="#4655cb" />
          <path d="M1909 0q8 18 10 40" stroke="#3440a0" strokeWidth="2" fill="none" />
        </svg>
        <AppButtons />
      </div>
    </footer>
  );
}

export default function App() {
  return (
    <div className="flex h-screen flex-col overflow-hidden bg-[#535353] font-['Open_Sans',sans-serif]">
      <div className="flex min-h-0 flex-1">
        <MockupsWindow />
        <DissertationWindow />
        <BackgroundWindow />
      </div>
      <Taskbar />
    </div>
  );
}
